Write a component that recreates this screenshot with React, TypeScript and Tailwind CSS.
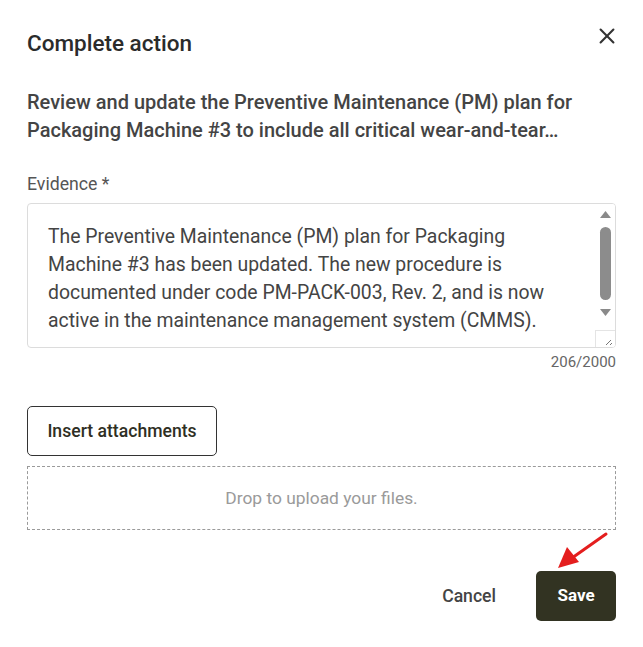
import React from "react";

export default function App() {
  return (
    <div className="w-[643px] h-[647px] bg-white relative" style={{ fontFamily: "Roboto, 'Noto Sans', sans-serif" }}>
      <div className="px-[27px] pt-[29px]">
        <div className="flex items-start justify-between">
          <h1 className="text-[22.5px] leading-[28px] font-medium text-[#2b2b2b]">Complete action</h1>
          <button className="mr-[-5px] mt-[-7px] text-[#333]">
            <svg width="28" height="28" viewBox="0 0 24 24" fill="none" stroke="currentColor" strokeWidth="1.8" strokeLinecap="round">
              <path d="M6.5 6.5l11 11M17.5 6.5l-11 11" />
            </svg>
          </button>
        </div>
        <p className="mt-[31px] text-[20px] leading-[28px] font-medium text-[#444] whitespace-nowrap">
          Review and update the Preventive Maintenance (PM) plan for
          <br />
          Packaging Machine #3 to include all critical wear-and-tear…
        </p>
        <div className="mt-[29px] text-[17.7px] leading-[22px] text-[#555]">Evidence *</div>
        <div className="mt-[8px] relative h-[145px] border border-[#dcdcdc] rounded-[4px] overflow-hidden">
          <div className="pl-[20px] pr-[40px] pt-[19px] text-[19.4px] leading-[28px] text-[#444] whitespace-nowrap">
            The Preventive Maintenance (PM) plan for Packaging
            <br />
            Machine #3 has been updated. The new procedure is
            <br />
            documented under code PM-PACK-003, Rev. 2, and is now
            <br />
            active in the maintenance management system (CMMS).
          </div>
          <div className="absolute right-0 top-0 bottom-0 w-[19px] flex flex-col items-center bg-white">
            <svg width="13" height="9" viewBox="0 0 13 9" className="mt-[6px]"><path d="M6.5 1L12 8H1z" fill="#8a8a8a" /></svg>
            <div className="mt-[8px] w-[11px] h-[73px] rounded-full bg-[#8c8c8c]" />
            <svg width="13" height="9" viewBox="0 0 13 9" className="mt-[8px]"><path d="M1 1h11L6.5 8z" fill="#8a8a8a" /></svg>
          </div>
          <div className="absolute right-0 bottom-0 w-[20px] h-[17px] border-l border-t border-[#e4e4e4] bg-white">
            <svg width="20" height="17" viewBox="0 0 20 17">
              <path d="M10 14l5-5M14 14l2-2" stroke="#777" strokeWidth="1" />
            </svg>
          </div>
        </div>
        <div className="mt-[4px] text-right text-[15px] leading-[20px] text-[#666]">206/2000</div>
        <button className="mt-[34px] h-[50px] w-[190px] border border-[#333] rounded-[5px] text-[17.6px] font-medium text-[#2f2f24]">
          Insert attachments
        </button>
        <div className="mt-[10px] h-[64px] border border-dashed border-[#9a9a9a] flex items-center justify-center text-[17.4px] text-[#9a9a9a]">
          Drop to upload your files.
        </div>
        <div className="mt-[41px] flex items-center justify-end">
          <button className="text-[17.6px] font-medium text-[#444] mr-[40px]">Cancel</button>
          <button className="w-[80px] h-[50px] rounded-[5px] bg-[#323322] text-white text-[17px] font-bold">Save</button>
        </div>
      </div>
      <svg className="absolute left-0 top-0 pointer-events-none" width="643" height="647">
        <line x1="606" y1="534" x2="572" y2="558" stroke="#e41e1e" strokeWidth="3" strokeLinecap="round" />
        <path d="M558 568 L567 547 L579 562 Z" fill="#e41e1e" />
      </svg>
    </div>
  );
}
